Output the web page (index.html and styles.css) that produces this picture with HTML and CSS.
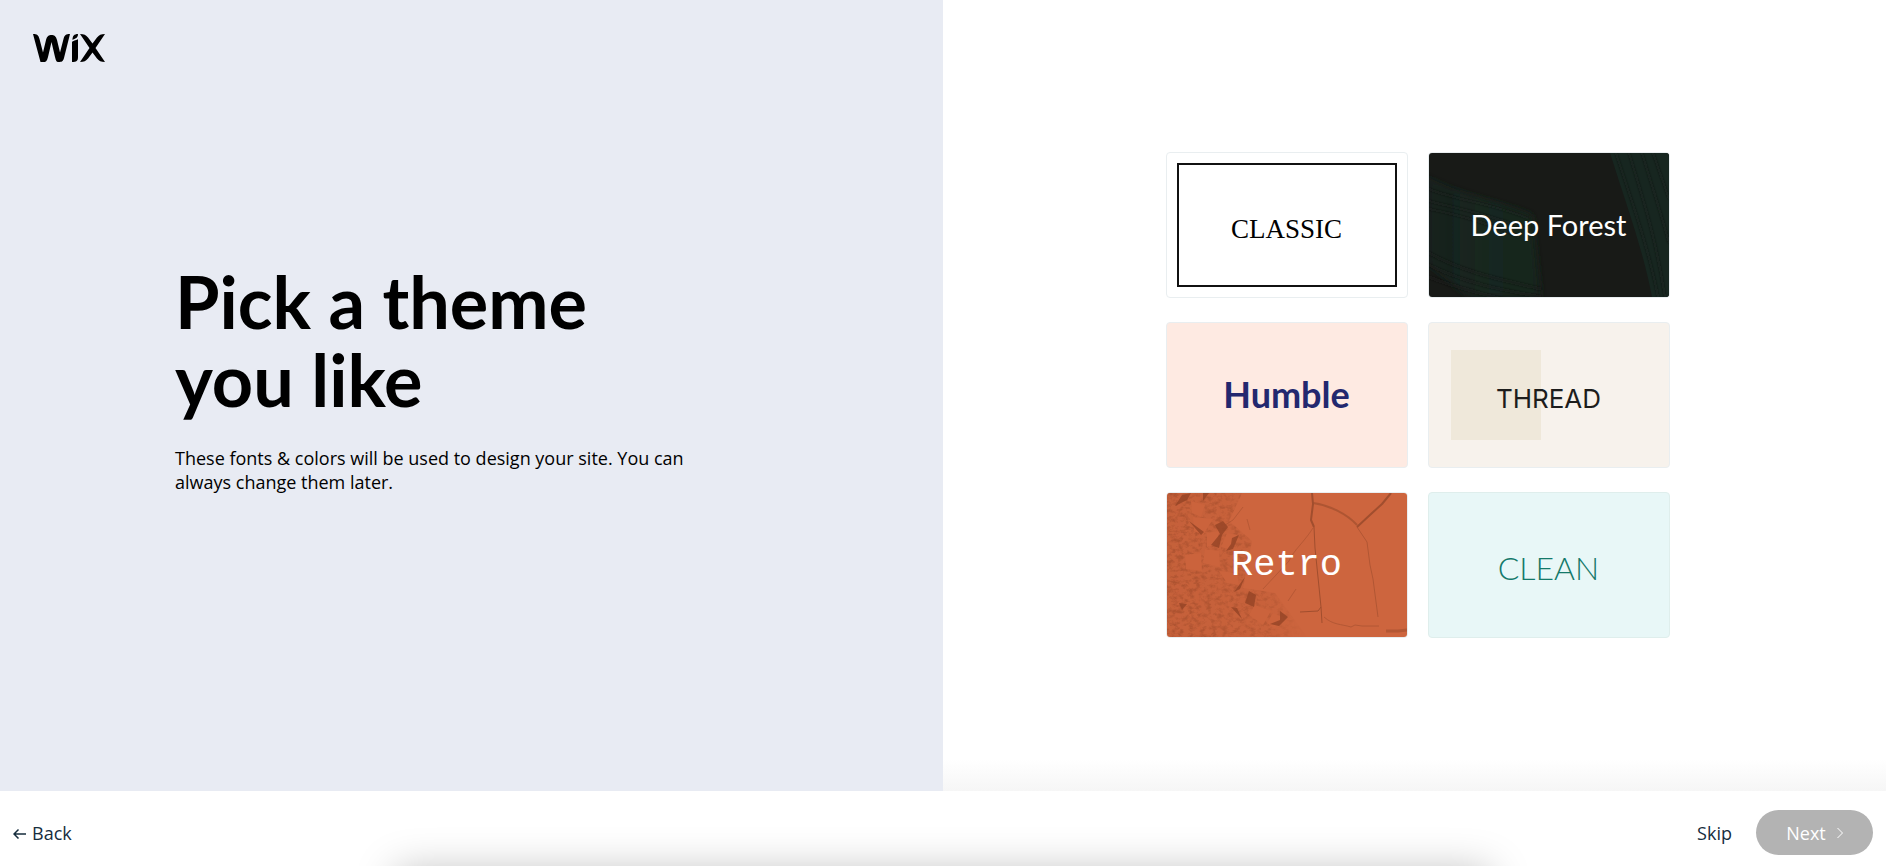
FILE: index.html
```html
<!DOCTYPE html>
<html lang="en">
<head>
    <meta charset="UTF-8">
    <meta name="viewport" content="width=device-width, initial-scale=1.0">
    <title>Pick a theme</title>
    <link rel="stylesheet" href="styles.css">
</head>
<body>
    <main class="main">
        <section class="intro">
            <a class="logo" href="#" aria-label="Wix">
                <svg width="72" height="28" viewBox="0 0 72 28">
                    <path d="M0 0C4 0 5.5 1 6.5 5L10 18.5 13 6C14 2 16 1 18.5 1S23 2 24 6L27 18.5 30.5 5C31.5 1 33 0 37 0L31 24C30 27.500 29 28 25.500 28 23.500 28 23 27 22 23L18.500 8 15 23C14 27 13 28 11 28L7.500 28Z"/>
                    <path d="M45 0C41 0 39.500 2 39.500 6 41 4.500 45 5 45 0Z"/>
                    <path d="M45 5C44 6.500 41 6 39 8V28C43.500 28 45 27 45 23Z"/>
                    <path d="M47 0C51 0 53 1 55 3.500L59.500 9.500 64 3.500C66 1 68 0 72 0L62.500 14 72 28C68 28 66 27 64 24.500L59.500 18.500 55 24.500C53 27 51 28 47 28L56.500 14Z"/>
                </svg>
            </a>
            <div class="intro-text">
                <h1>Pick a theme<br>you like</h1>
                <p>These fonts &amp; colors will be used to design your site. You can always change them later.</p>
            </div>
        </section>

        <section class="picker">
            <div class="themes">
                <button class="theme classic" type="button"><span>CLASSIC</span></button>
                <button class="theme forest" type="button">
                    <svg class="art" viewBox="0 0 240 144" preserveAspectRatio="none" aria-hidden="true">
                        <defs>
                            <filter id="soft" x="-20%" y="-20%" width="140%" height="140%"><feGaussianBlur stdDeviation="3"/></filter>
                            <filter id="streak"><feGaussianBlur stdDeviation=".8"/></filter>
                            <linearGradient id="leaf" x1="0" y1="0" x2="1" y2="0">
                                <stop offset="0" stop-color="#162822" stop-opacity=".4"/>
                                <stop offset=".6" stop-color="#172820"/>
                                <stop offset="1" stop-color="#17241d"/>
                            </linearGradient>
                        </defs>
                        <rect width="240" height="144" fill="#181a17"/>
                        <path d="M-4 22C30 42 75 50 103 62L112 144H40L-4 110Z" fill="url(#leaf)" filter="url(#soft)"/>
                        <path d="M181 0H240V144H223C214 96 196 48 181 0Z" fill="#172620"/>
                        <g fill="none" stroke="#181a17" stroke-opacity=".5" filter="url(#streak)">
                            <path d="M0 36C30 48 70 52 100 66M0 48C40 58 60 62 98 76M0 56C30 62 60 70 90 84" stroke-width="2"/>
                            <path d="M0 100C40 122 80 128 112 136M0 112C40 132 80 138 112 144M0 124C30 136 60 142 80 148" stroke-width="3"/>
                            <path d="M187 0C202 46 220 96 229 144M200 0C212 40 226 80 236 144M213 0C222 30 232 60 240 90M224 0L240 46" stroke-width="2"/>
                        </g>
                    </svg>
                    <span>Deep Forest</span>
                </button>
                <button class="theme humble" type="button"><span>Humble</span></button>
                <button class="theme thread" type="button"><span>THREAD</span></button>
                <button class="theme retro" type="button">
                    <svg class="art" viewBox="0 0 240 144" preserveAspectRatio="none" aria-hidden="true">
                        <defs>
                            <filter id="grit" x="0" y="0" width="100%" height="100%" color-interpolation-filters="sRGB">
                                <feTurbulence type="fractalNoise" baseFrequency=".18 .24" numOctaves="4" seed="8"/>
                                <feColorMatrix values="0 0 0 0 .58  0 0 0 0 .27  0 0 0 0 .15  3 0 0 0 -1.300"/>
                            </filter>
                            <linearGradient id="fade" x1="0" y1="0" x2="1" y2="0">
                                <stop offset="0" stop-color="#fff"/>
                                <stop offset=".7" stop-color="#fff" stop-opacity=".7"/>
                                <stop offset="1" stop-color="#fff" stop-opacity="0"/>
                            </linearGradient>
                            <mask id="rubble"><path d="M0 0H75L62 28 85 48 76 95 108 100 140 144H0Z" fill="url(#fade)"/></mask>
                        </defs>
                        <rect width="240" height="144" fill="#cd653e"/>
                        <g mask="url(#rubble)">
                            <rect width="140" height="144" fill="#a94f2e" opacity=".2"/>
                            <rect width="140" height="144" filter="url(#grit)" opacity=".5"/>
                        </g>
                        <!-- loose stones -->
                        <g fill="#cb633c">
                            <path d="M26 24L46 26 36 42 27 38ZM40 40L52 38 50 52 40 54ZM60 40L70 42 62 56 54 54ZM38 56L52 58 53 74 36 70ZM18 62L34 60 35 78 19 76ZM88 112L104 118 96 132 82 122ZM52 78L70 80 72 92 60 90ZM24 8L38 12 34 24 25 20ZM106 120L115 124 108 136 100 130Z"/>
                        </g>
                        <g fill="#934426" opacity=".8">
                            <path d="M48 32L56 28 61 34 55 42 52 55 44 52 53 41ZM65 45L72 42 66 56 59 58 64 51ZM82 98L89 102 87 114 78 110ZM78 84L73 96 67 99ZM113 118L121 124 112 133 103 131 113 127ZM15 2L24 0 20 7 8 13ZM36 0L42 0 36 8ZM12 110L20 111 15 117ZM64 114L70 115 75 126ZM22 28L37 39 34 42Z"/>
                        </g>
                        <!-- cracks -->
                        <g fill="none" stroke="#a14e2e" stroke-linejoin="round">
                            <path d="M145 0L146 11 144 27 147 34" stroke-width="2"/>
                            <path d="M147 34L148 55 152 94 154 114 151 118 133 119M154 114L155 130"/>
                            <path d="M146 35C138 48 126 58 122 68L96 96" opacity=".5"/>
                            <path d="M146 10C162 12 180 21 190 32" stroke-width="2" opacity=".7"/>
                            <path d="M190 34L200 49 203 72 206 86 211 124" opacity=".65"/>
                            <path d="M190 34L204 21 215 11 224 0" stroke-width="2"/>
                            <path d="M157 124C166 132 174 131 184 134L188 132 195 133 212 133" opacity=".6"/>
                            <path d="M219 138L231 138 240 137" stroke-width="3" opacity=".6"/>
                            <path d="M76 14L66 27 58 32M80 26L83 37M129 96L121 108" opacity=".5"/>
                        </g>
                    </svg>
                    <span>Retro</span>
                </button>
                <button class="theme clean" type="button"><span>CLEAN</span></button>
            </div>
        </section>
    </main>

    <footer class="footer">
        <button class="back" type="button">
            <svg width="13" height="12" viewBox="0 0 13 12"><path d="M5.500 2.500L1 7l4.500 4.500M1 7h12" stroke-width="1.500"/></svg>
            Back
        </button>
        <div class="actions">
            <button class="skip" type="button">Skip</button>
            <button class="next" type="button" disabled>
                Next
                <svg width="6" height="12" viewBox="0 0 6 12"><path d="M.5 1l5 5-5 5"/></svg>
            </button>
        </div>
    </footer>
</body>
</html>
```

FILE: styles.css
```css
* {
    box-sizing: border-box;
}
body {
    margin: 0;
    min-height: 100vh;
    display: flex;
    flex-direction: column;
    font-family: "Open Sans", "Noto Sans", sans-serif;
    color: #000;
    background-color: #fff;
}
button {
    margin: 0;
    padding: 0;
    border: none;
    background: none;
    font-family: inherit;
    cursor: pointer;
}
.main {
    flex: 1;
    display: flex;
}
.intro {
    width: 50%;
    padding: 34px 33px;
    display: flex;
    flex-direction: column;
    background-color: #e8ebf3;
}
.logo {
    align-self: flex-start;
}
.logo svg {
    display: block;
}
.intro-text {
    flex: 1;
    display: flex;
    flex-direction: column;
    justify-content: center;
    padding: 0 0 64px 142px;
}
h1 {
    margin: 0 0 28px;
    font-family: Lato, sans-serif;
    font-size: 72px;
    line-height: 78px;
    font-weight: 700;
}
.intro-text p {
    margin: 0;
    max-width: 530px;
    font-size: 18px;
    line-height: 24px;
}
.picker {
    width: 50%;
    display: flex;
    align-items: center;
    justify-content: center;
    padding: 0 0 2px 6px;
    background: linear-gradient(to top, #f6f6f6, #fff 32px);
}
.themes {
    display: grid;
    grid-template-columns: repeat(2, 242px);
    gap: 24px 20px;
}
.theme {
    position: relative;
    height: 146px;
    display: flex;
    align-items: center;
    justify-content: center;
    border: 1px solid #e9eef0;
    border-radius: 4px;
    overflow: hidden;
}
.theme span {
    position: relative;
}
.art {
    position: absolute;
    inset: 0;
    width: 100%;
    height: 100%;
}
.classic {
    padding: 10px;
    background-color: #fff;
}
.classic span {
    flex: 1;
    align-self: stretch;
    display: flex;
    align-items: center;
    justify-content: center;
    padding-top: 10px;
    border: 2px solid #111;
    font-family: "Liberation Serif", serif;
    font-size: 27px;
}
.forest {
    color: #fff;
    font-family: Lato, sans-serif;
    font-size: 29px;
    font-weight: 400;
}
.humble {
    padding-bottom: 2px;
    color: #23286f;
    background-color: #feeae2;
    font-family: Lato, sans-serif;
    font-size: 36px;
    font-weight: 700;
}
.thread {
    padding-top: 8px;
    color: #1d1d1d;
    background-color: #f7f2ec;
    font-family: Inter, sans-serif;
    font-size: 26px;
    font-weight: 400;
}
.thread::before {
    content: "";
    position: absolute;
    top: 27px;
    left: 22px;
    width: 90px;
    height: 90px;
    background-color: #efe8da;
}
.retro {
    color: #fff;
    font-family: "Liberation Mono", monospace;
    font-size: 37px;
}
.clean {
    padding-top: 6px;
    border-color: #dfeeec;
    color: #14796a;
    background-color: #e8f7f7;
    font-family: Lato, sans-serif;
    font-size: 32px;
    font-weight: 300;
}
.footer {
    position: relative;
    height: 75px;
    display: flex;
    align-items: center;
    justify-content: space-between;
    padding: 8px 13px 0;
    background-color: #fff;
    overflow: hidden;
}
.footer::after {
    content: "";
    position: absolute;
    top: 100%;
    left: 21%;
    right: 21%;
    height: 80px;
    box-shadow: 0 4px 40px rgba(0, 0, 0, 0.25);
}
.footer svg {
    fill: none;
    stroke: currentColor;
}
.back,
.skip {
    display: flex;
    align-items: center;
    gap: 6px;
    font-size: 18px;
    color: #162d3d;
}
.actions {
    display: flex;
    align-items: center;
    gap: 24px;
}
.next {
    display: flex;
    align-items: center;
    justify-content: center;
    gap: 11px;
    width: 117px;
    height: 45px;
    border-radius: 23px;
    font-size: 18px;
    color: #fff;
    background-color: #b3b3b3;
    cursor: default;
}
```
